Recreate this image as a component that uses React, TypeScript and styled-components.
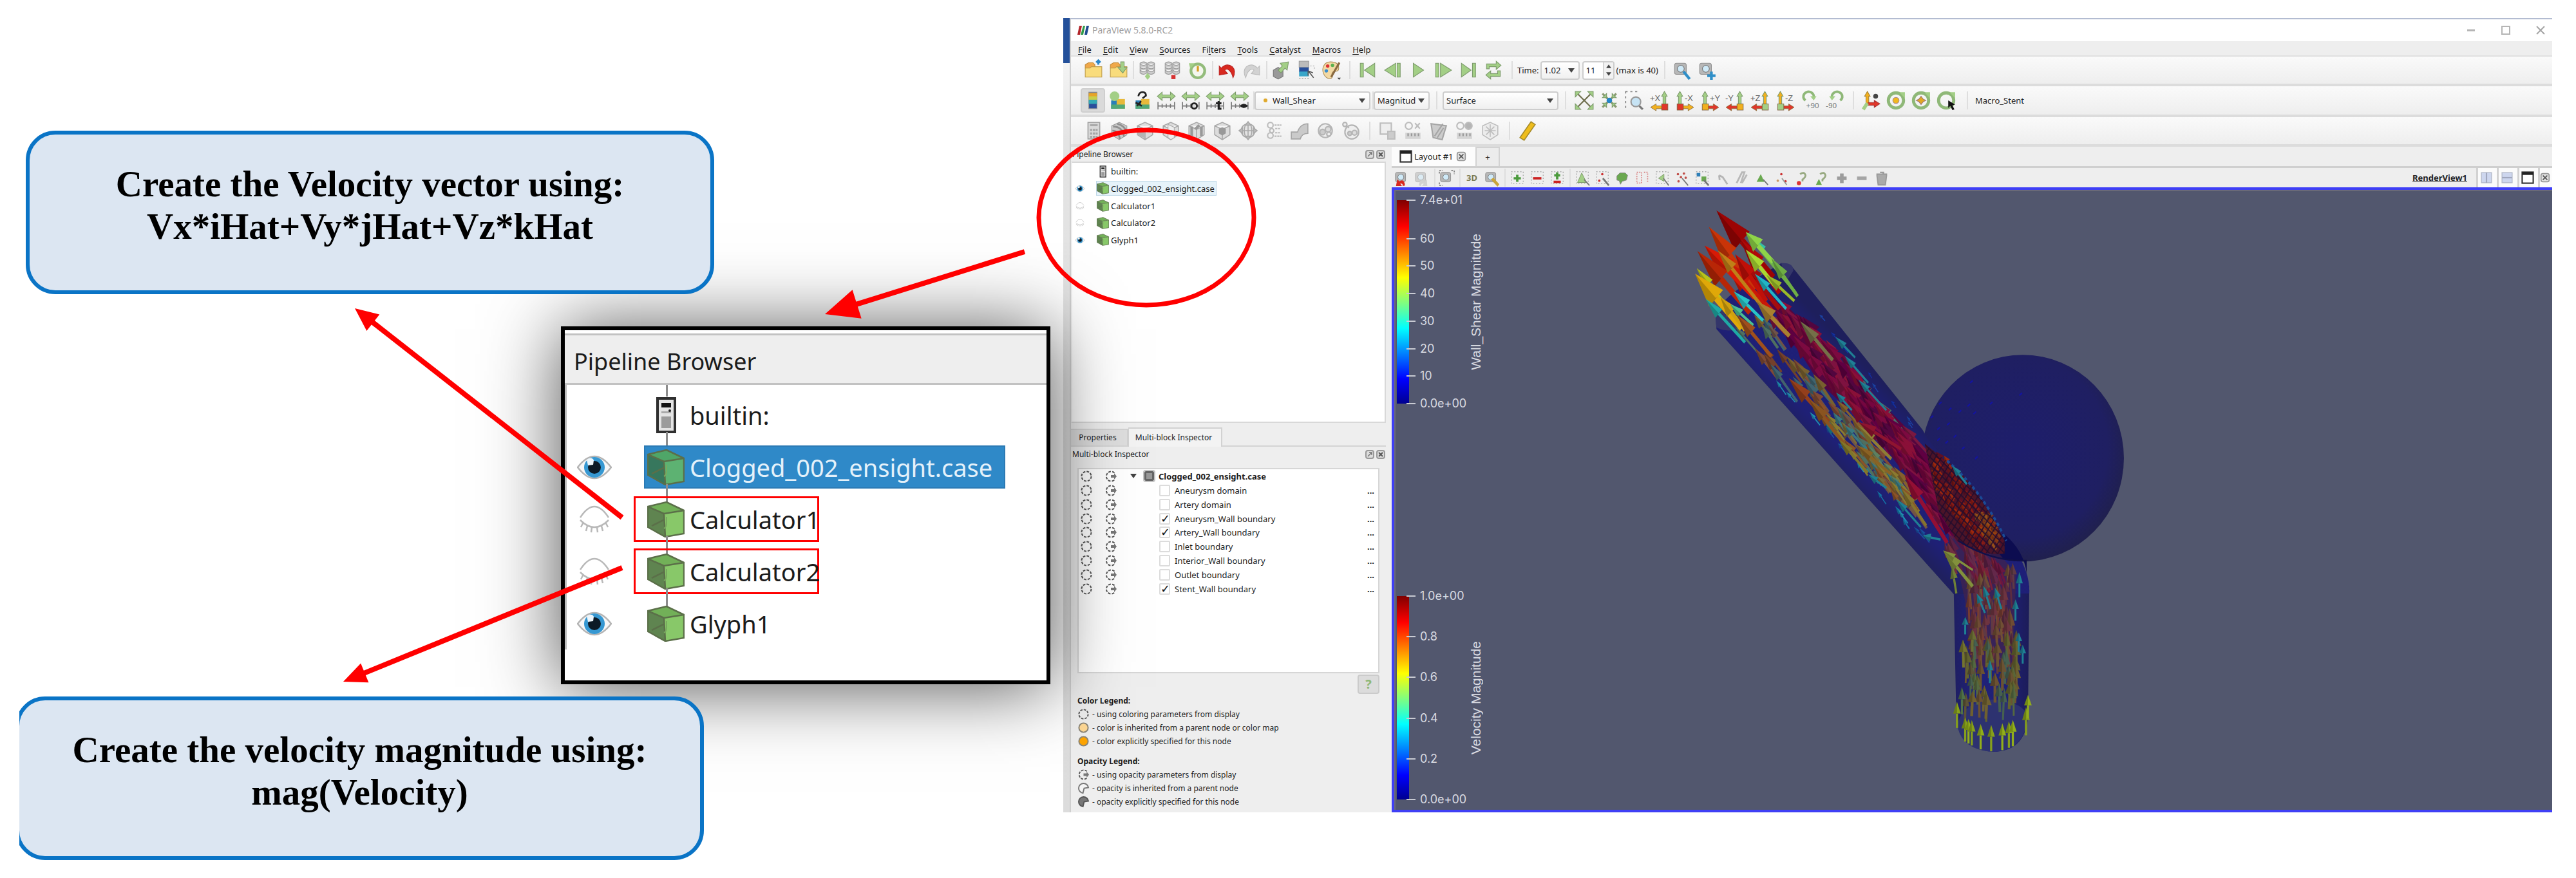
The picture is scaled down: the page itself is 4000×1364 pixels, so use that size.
import React, { useId } from 'react';
import styled, { createGlobalStyle, css } from 'styled-components';

const GlobalStyle = createGlobalStyle`
  *, *::before, *::after { box-sizing: border-box; }
  body { margin: 0; background: #fff; }
  button, input, select { font: inherit; color: inherit; margin: 0; }
  ul { list-style: none; margin: 0; padding: 0; }
`;

const ui = css`
  font-family: 'Noto Sans', 'Open Sans', sans-serif;
  font-size: 13px;
  line-height: 16px;
  color: #1c1c1c;
`;

/* ---------- figure ---------- */

const Figure = styled.main`
  position: relative;
  display: flex;
  align-items: flex-start;
  min-height: 100vh;
  overflow: hidden;
`;

const Notes = styled.section`
  position: relative;
  z-index: 1;
  flex: 0 0 1621px;
  margin-left: 30px;
  padding: 203px 20px 30px 0;
  display: flex;
  flex-direction: column;
  clip-path: inset(0 -200px 0 0);
`;

const Callout = styled.p<{ $indent: number }>`
  position: relative;
  z-index: 1;
  align-self: flex-start;
  width: 1069px;
  height: 254px;
  margin: 0 0 0 ${(p) => p.$indent}px;
  padding-top: 44px;
  border: 6px solid #0a74c6;
  border-radius: 46px;
  background: #dce6f2;
  color: #000;
  font: bold 57px/66px 'Liberation Serif', 'Times New Roman', serif;
  text-align: center;
`;

const Inset = styled.section`
  align-self: flex-end;
  width: 760px;
  height: 556px;
  margin: 50px 0 19px;
  border: 6px solid #000;
  background: #fff;
  box-shadow: 0 4px 110px rgba(0, 0, 0, 0.68);
  font: 38px/50px 'Noto Sans', 'Open Sans', sans-serif;
  color: #1b1b1b;
`;

const InsetTitle = styled.h2`
  margin: 5px 0 0;
  padding: 16px 14px 0;
  height: 80px;
  border: solid #c2c2c2;
  border-width: 3px 0;
  background: #eee;
  font: inherit;
  font-size: 36px;
`;

const InsetTree = styled.ul`
  padding-top: 6px;
  border-left: 3px solid #bdbdbd;
`;

const InsetRow = styled.li`
  position: relative;
  display: flex;
  align-items: center;
  height: 81px;
  padding-left: 16px;
  &::before {
    content: '';
    position: absolute;
    left: 154px;
    top: -14px;
    width: 3px;
    height: 28px;
    background: #8d8d8d;
  }
  &:first-child::before { top: -6px; height: 18px; }
`;

const InsetEye = styled.span`
  width: 56px;
  height: 52px;
  display: flex;
  align-items: center;
  & svg { width: 54px; height: 50px; }
`;

const InsetItem = styled.span<{ $selected?: boolean; $framed?: boolean }>`
  position: relative;
  display: flex;
  align-items: center;
  gap: 8px;
  height: 71px;
  padding-left: 18px;
  border: 3px solid transparent;
  & svg { width: 58px; height: 56px; flex: none; }
  margin-left: 32px;
  ${(p) => p.$framed && css`width: 288px; border-color: #f00; white-space: nowrap;`}
  ${(p) => p.$selected && css`
    margin-left: 48px;
    padding: 0 18px 0 3px;
    height: 67px;
    background: #2f89c8;
    border: 2px solid #2b7ab4;
    color: #e4f1fa;
  `}
`;

const Overlay = styled.svg`
  position: absolute;
  z-index: 2;
  left: 0;
  top: 0;
  width: 2000px;
  height: 1364px;
  pointer-events: none;
`;

/* ---------- application window ---------- */

const BackWindow = styled.div`
  flex: 0 0 10px;
  height: 1234px;
  margin-top: 28px;
  background: linear-gradient(#24509a 70px, #f4f4f4 70px, #e4e4e4 190px, #dcdcdc);
`;

const AppWindow = styled.div`
  ${ui}
  flex: 1;
  min-width: 0;
  margin: 28px 37px 0 0;
  border-top: 2px solid #b3bcd1;
  border-left: 2px solid #cfcfcf;
  background: #eee;
`;

const TitleBar = styled.header`
  display: flex;
  align-items: center;
  height: 34px;
  padding: 0 9px;
  background: #fff;
  color: #999;
`;

const AppTitle = styled.h1`
  flex: 1;
  margin: 0 0 0 4px;
  font: 14px/18px 'Open Sans', sans-serif;
`;

const WindowButtons = styled.div`
  display: flex;
  gap: 36px;
`;

const PlainButton = styled.button`
  display: grid;
  place-items: center;
  width: 18px;
  height: 18px;
  padding: 0;
  border: 0;
  background: none;
  flex: none;
  & svg { max-width: 16px; max-height: 16px; }
`;

const MenuBar = styled.nav`
  display: flex;
  gap: 18px;
  height: 24px;
  padding: 3px 11px 0;
  border-bottom: 2px solid #e0e0e0;
  & button { padding: 0; border: 0; background: none; }
  & u { text-underline-offset: 2px; }
`;

const Toolbar = styled.div<{ $h: number }>`
  display: flex;
  align-items: center;
  height: ${(p) => p.$h}px;
  padding-left: 15px;
  border-bottom: 4px solid #dcdcdc;
  background: linear-gradient(#fafafa, #eee);
`;

const ToolButton = styled.button<{ $w?: number; $on?: boolean }>`
  display: grid;
  place-items: center;
  flex: none;
  width: ${(p) => p.$w ?? 39}px;
  height: 38px;
  padding: 0;
  border: 2px solid ${(p) => (p.$on ? '#cfcfcf' : 'transparent')};
  border-radius: 4px;
  background: ${(p) => (p.$on ? '#dadada' : 'none')};
  & svg { width: 30px; height: 30px; overflow: visible; }
`;

const Handle = styled.span<{ $w?: number }>`
  flex: none;
  width: ${(p) => p.$w ?? 8}px;
  height: 28px;
  background: linear-gradient(90deg, transparent 50%, #dedede 50%, #dedede calc(50% + 2px), transparent calc(50% + 2px));
`;

const Field = styled.span<{ $w: number }>`
  position: relative;
  display: flex;
  align-items: center;
  flex: none;
  width: ${(p) => p.$w}px;
  height: 29px;
  border: 2px solid #cdcdcd;
  border-radius: 4px;
  background: linear-gradient(#fff, #f0f0f0);
  & > svg { position: absolute; right: 6px; top: 9px; width: 10px; height: 7px; pointer-events: none; }
`;

const Select = styled.select<{ $pad?: number }>`
  appearance: none;
  width: 100%;
  height: 100%;
  padding: 0 16px 0 ${(p) => p.$pad ?? 4}px;
  border: 0;
  background: none;
`;

const Dot = styled.i`
  position: absolute;
  left: 12px;
  width: 6px;
  height: 6px;
  border-radius: 3px;
  background: #e0a92c;
`;

const ToolLabel = styled.label<{ $l?: number; $r?: number }>`
  margin: 0 ${(p) => p.$r ?? 0}px 0 ${(p) => p.$l ?? 0}px;
`;

const Spin = styled(Field)`
  margin-left: 4px;
  background: #fff;
  & input { width: 30px; padding: 0 0 0 4px; border: 0; background: none; }
`;

const SpinButtons = styled.span`
  display: flex;
  flex-direction: column;
  flex: 1;
  height: 100%;
  border-left: 2px solid #d4d4d4;
  background: #f2f2f2;
  & button { flex: 1; display: grid; place-items: center; padding: 0; border: 0; background: none; }
  & svg { width: 8px; height: 6px; }
`;

const Body = styled.div`
  display: flex;
`;

const Side = styled.aside`
  flex: 0 0 498px;
  padding-right: 9px;
  display: flex;
  flex-direction: column;
`;

const DockTitle = styled.h2`
  display: flex;
  align-items: center;
  gap: 3px;
  height: 23px;
  margin: 0;
  padding: 0 1px 0 2px;
  font: inherit;
  font-size: 12px;
  & span { flex: 1; }
`;

const DockButton = styled.button`
  display: grid;
  place-items: center;
  width: 14px;
  height: 14px;
  padding: 0;
  border: 2px solid #999;
  border-radius: 4px;
  background: #ddd;
  & svg { width: 8px; height: 8px; }
`;

const Tree = styled.ul`
  height: 406px;
  border: 2px solid #d8d8d8;
  border-left-color: #eee;
  background: #fff;
  display: grid;
  grid-template-rows: repeat(5, 53fr) 535fr;
`;

const TreeRow = styled.li`
  display: flex;
  align-items: center;
  padding-left: 4px;
  & > span:first-child { width: 16px; height: 14px; margin-right: 17px; display: flex; }
  & > span:first-child svg { width: 16px; height: 14px; }
`;

const TreeItem = styled.span<{ $selected?: boolean }>`
  display: flex;
  align-items: center;
  gap: 3px;
  height: 23px;
  padding-right: 2px;
  border: 1px solid ${(p) => (p.$selected ? '#bcd6e6' : 'transparent')};
  background: ${(p) => (p.$selected ? '#e6f3fa' : 'none')};
  & svg { width: 19px; height: 19px; }
`;

const Tabs = styled.div`
  display: flex;
  align-items: flex-end;
  height: 37px;
  border-bottom: 2px solid #d4d4d4;
`;

const Tab = styled.button<{ $active?: boolean }>`
  width: ${(p) => (p.$active ? 146 : 89)}px;
  height: ${(p) => (p.$active ? 30 : 26)}px;
  padding: 0 4px 0 0;
  margin-bottom: ${(p) => (p.$active ? -2 : 0)}px;
  border: 2px solid #d2d2d2;
  border-bottom: 0;
  border-left-width: ${(p) => (p.$active ? 1 : 0)}px;
  background: ${(p) => (p.$active ? '#f3f3f3' : '#dedede')};
  font-size: 12px;
`;

const BlockTree = styled.ul`
  height: 319px;
  margin: 10px 10px 0;
  border: 2px solid #d6d6d6;
  background: #fff;
  display: grid;
  grid-template-rows: repeat(9, 22fr) 119fr;
`;

const BlockRow = styled.li<{ $root?: boolean }>`
  display: flex;
  align-items: center;
  font-weight: ${(p) => (p.$root ? 'bold' : 'normal')};
  padding-right: 6px;
  & > svg { width: 20px; height: 20px; margin: 0 18px 0 2px; flex: none; }
  & > svg + svg { margin: 0; }
  & > label { flex: 1; margin-left: 7px; }
`;

const Expander = styled.span<{ $root?: boolean }>`
  display: grid;
  place-items: center;
  width: ${(p) => (p.$root ? 42 : 65)}px;
  padding-left: ${(p) => (p.$root ? 8 : 0)}px;
  & svg { width: 10px; height: 7px; }
`;

const Check = styled.input`
  appearance: none;
  display: grid;
  place-items: center;
  width: 17px;
  height: 18px;
  border: 2px solid #dcdcdc;
  border-radius: 2px;
  background: #fff;
  &:checked::after { content: '✓'; font: bold 18px/14px 'DejaVu Sans', sans-serif; color: #111; }
  &[data-partial='true'] { width: 15px; height: 15px; border: 3px solid #666; background: #999; outline: 2px solid #c4c4c4; }
`;

const HelpRow = styled.div`
  display: flex;
  justify-content: flex-end;
  padding: 2px 10px 0;
`;

const HelpButton = styled.button`
  width: 34px;
  height: 30px;
  padding: 0;
  border: 2px solid #cbcbcb;
  border-radius: 4px;
  background: #dcdcdc;
  color: #8fb878;
  font: bold 20px/24px 'Noto Sans', sans-serif;
`;

const LegendBlock = styled.section`
  padding: 0 10px;
  & + & { padding-top: 10px; padding-bottom: 6px; }
  & h3 { margin: 0; font: bold 12px/21px 'Noto Sans', sans-serif; }
  & li { display: flex; align-items: center; gap: 4px; height: 21px; font-size: 12px; line-height: 21px; }
  & svg { width: 19px; height: 19px; flex: none; }
`;

const Main = styled.section`
  flex: 1;
  min-width: 0;
  display: flex;
  flex-direction: column;
`;

const LayoutTabs = styled.div`
  display: flex;
  height: 33px;
  border-bottom: 3px solid #cfcfcf;
`;

const LayoutTab = styled.span`
  display: flex;
  align-items: center;
  gap: 3px;
  padding: 0 0 0 12px;
  width: 130px;
  background: #fcfcfc;
  white-space: nowrap;
  & > svg { width: 20px; height: 20px; flex: none; }
`;

const AddTab = styled.button`
  width: 38px;
  border: solid #d2d2d2;
  border-width: 2px 2px 0;
  padding: 0;
  background: #ececec;
`;

const ViewBar = styled.div`
  display: flex;
  align-items: center;
  height: 30px;
`;

const ViewButton = styled(ToolButton)`
  height: 28px;
  & svg { width: 26px; height: 26px; }
  font-weight: bold;
  color: #7a7a52;
`;

const ViewName = styled.a`
  margin-left: auto;
  margin-right: 14px;
  color: #222;
  font-weight: bold;
  text-decoration: underline;
`;

const SplitButton = styled.button<{ $w?: number }>`
  display: grid;
  place-items: center;
  width: ${(p) => p.$w ?? 32}px;
  height: 30px;
  padding: 0 3px 0 0;
  border: solid #d2d2d2;
  border-width: 0 0 0 3px;
  background: #fbfbfb;
  & svg { width: ${(p) => (p.$w ? 16 : 20)}px; height: 22px; }
`;

const RenderArea = styled.div`
  flex: 1;
  display: flex;
  border: 4px solid #3f3ff5;
  border-right: 0;
  background: #52576e;
  box-shadow: inset 1px 1px 0 1px #6a6a78;
`;

const ColorLegends = styled.div`
  display: flex;
  flex-direction: column;
  justify-content: space-between;
  padding: 16px 0 16px 4px;
  width: 140px;
  flex: none;
`;

const Legend = styled.div`
  display: flex;
  align-items: center;
  height: 316px;
  color: #d9dbe2;
`;

const LegendBar = styled.div`
  position: relative;
  width: 20px;
  height: 100%;
  background: linear-gradient(#800000, #f00 13%, #ff0 38%, #0ff 63%, #00f 88%, #000090);
`;

const Tick = styled.span`
  position: absolute;
  left: 15px;
  display: flex;
  align-items: center;
  gap: 7px;
  height: 20px;
  margin-top: -10px;
  font: 18px/20px Inter, sans-serif;
  white-space: nowrap;
  &::before { content: ''; width: 14px; height: 2px; background: #c9cbd3; }
`;

const LegendTitle = styled.span`
  margin-left: 91px;
  writing-mode: vertical-rl;
  transform: rotate(180deg);
  font: 21px/26px 'Liberation Sans', Arial, sans-serif;
  white-space: nowrap;
`;

const Scene = styled.svg`
  flex: none;
  width: 800px;
  height: 934px;
  margin-left: 244px;
`;

/* ---------- small drawings ---------- */

const Caret = () => (
  <svg viewBox="0 0 10 7"><path d="M0 0h10L5 7z" fill="#444" /></svg>
);

const Cube = ({ tint }: { tint?: boolean }) => {
  const [top, left, right] = tint ? ['#4fa668', '#37775d', '#5db272'] : ['#72b058', '#5f8450', '#88c869'];
  return (
    <svg viewBox="0 0 58 56">
      <path d="M1 8L30 1 57 14 26 19z" fill={top} />
      <path d="M1 8L26 19 28 55 1 40z" fill={left} />
      <path d="M26 19L57 14 57 50 28 55z" fill={right} />
      <path d="M1 8L30 1 57 14V50L28 55 1 40zM1 8L26 19 57 14M26 19L28 55M7 38L27 28" fill="none" stroke="#5b6f49" strokeWidth="2.5" />
      <path d="M30 24V34Q30 40 26 42" fill="none" stroke="#79a95f" strokeWidth="2" />
    </svg>
  );
};

const Eye = ({ open }: { open: boolean }) =>
  open ? (
    <svg viewBox="0 0 54 50">
      <path d="M1 25Q27-9 53 25 27 59 1 25z" fill="#f7f7f7" stroke="#b4b4b4" strokeWidth="2.5" />
      <circle cx="27" cy="25" r="16" fill="#3698d2" />
      <circle cx="27" cy="25" r="10" fill="#0c1a26" />
      <path d="M15 13q8-5 11 1l-1 7-8 1z" fill="#eef6fb" />
    </svg>
  ) : (
    <svg viewBox="0 0 54 50" fill="none" stroke="#b9b9b9" strokeWidth="2.5">
      <path d="M5 22Q27-12 49 22" />
      <path d="M5 26Q27 48 49 26M9 31l-3 6M16 35l-2 8M23 37l-1 8M31 37l1 8M38 35l2 8M45 31l3 6" />
    </svg>
  );

const Server = () => (
  <svg viewBox="0 0 58 56">
    <rect x="16" y="2" width="27" height="52" fill="#e3e3e3" stroke="#2f2f2f" strokeWidth="4" />
    <rect x="22" y="9" width="15" height="7" fill="#111" />
    <rect x="22" y="22" width="15" height="3" fill="#aaa" />
    <rect x="22" y="30" width="15" height="18" fill="#9b9b9b" />
    <circle cx="35" cy="21" r="2" fill="#222" />
  </svg>
);

const Ring = ({ kind }: { kind: string }) => (
  <svg viewBox="0 0 20 20">
    {kind === 'dash' && <circle cx="10" cy="10" r="7.5" fill="none" stroke="#555" strokeWidth="2" strokeDasharray="3.9 2" />}
    {kind === 'pie' && (
      <g>
        <path d="M15.5 4.5A7.5 7.5 0 1 0 15.5 15.5" fill="none" stroke="#555" strokeWidth="2" strokeDasharray="3.9 2" />
        <path d="M10 8h5V5l4 5-4 5v-3h-5z" fill="#777" />
      </g>
    )}
    {kind === 'light' && <circle cx="10" cy="10" r="7.5" fill="#ffd995" stroke="#8b8577" strokeWidth="2" />}
    {kind === 'solid' && <circle cx="10" cy="10" r="7.5" fill="#ffa500" stroke="#8b8577" strokeWidth="2" />}
    {kind === 'open' && <path d="M9 18A8 8 0 1 1 18 9L11 10z" fill="#f4f4f4" stroke="#777" strokeWidth="2" />}
    {kind === 'full' && <path d="M9 18A8 8 0 1 1 18 9L11 10z" fill="#777" stroke="#555" strokeWidth="2" />}
  </svg>
);

const G = '#a3cf86';
const GS = '#7c9a6b';

const camera = (
  <g>
    <rect x="3" y="4" width="17" height="16" rx="3" fill="#b7b7b7" stroke="#8e8e8e" />
    <circle cx="12" cy="12" r="5" fill="#cfeaf8" stroke="#777" />
  </g>
);
const cyl = (x: number) => (
  <path d={`M${x} 4Q${x + 5} 0 ${x + 10} 4V18Q${x + 5} 22 ${x} 18zM${x} 5Q${x + 5} 9 ${x + 10} 5M${x} 10Q${x + 5} 14 ${x + 10} 10M${x} 14Q${x + 5} 18 ${x + 10} 14`} fill="#ccc" stroke="#999" />
);
const box = <path d="M3 7L14 2 25 7V20L14 27 3 20zM3 7L14 12 25 7M14 12V27" fill="#dcdcdc" stroke="#a8a8a8" strokeWidth="1.5" />;
const dashBox = <rect x="4" y="3" width="20" height="20" fill="none" stroke="#aaa" strokeWidth="1.5" strokeDasharray="2 3" />;
const folder = (
  <g>
    <path d="M2 6l5-3h6l3 3v5H2z" fill="#f0a84a" stroke="#c08a3a" />
    <path d="M2 24V11h7l2-2h15v15z" fill="#f9dc7c" stroke="#bd9a48" />
  </g>
);
const mini = (
  <g>
    <path d="M5 14h10v12H5z" fill="#2a7fb8" />
    <path d="M13 12h12v14H13z" fill="#e8b93a" />
    <path d="M5 20h20v6H5z" fill="#52a877" />
  </g>
);
const range = (
  <g>
    <path d="M1 8l7-6v4h12V2l7 6-7 6v-4H8v4z" fill={G} stroke={GS} />
    <path d="M2 16V27M26 16V27M2 22H26M8 19v6M14 19v6M20 19v6" stroke="#777" strokeWidth="1.5" fill="none" />
  </g>
);
const axis = (up: string, side: string, corner: string, left: boolean) => {
  const c = left ? 18 : 4;
  return (
    <g>
      <path d={`M${c + 1} 20V8h-2l4-7 4 7h-2V20z`} fill={up} stroke={GS} />
      <path d={left ? 'M18 22H9v-3l-8 5 8 5v-3h9z' : 'M10 22h9v-3l8 5-8 5v-3h-9z'} fill={side} stroke="#8a6d3a" strokeWidth=".8" />
      <rect x={c - 1} y="19" width="9" height="9" fill={corner} stroke="#7a5a3a" strokeWidth=".8" />
    </g>
  );
};
const axisText = (t: string, left: boolean) => (
  <text x={left ? 0 : 14} y="15" fontSize="12" fill="#666" fontFamily="Liberation Sans, sans-serif">{t}</text>
);

const icons: Record<string, React.ReactNode> = {
  open: <g>{folder}<path d="M21 0v6M18 3l3-3 3 3" stroke="#2a86c8" strokeWidth="3" fill="none" /></g>,
  save: <g>{folder}<path d="M17 2h5v8h4l-6 8-7-8h4z" fill={G} stroke={GS} /></g>,
  connect: <g>{cyl(3)}{cyl(14)}<path d="M14 18l4 5-4 5-4-5z" fill={G} /></g>,
  disconnect: <g>{cyl(3)}{cyl(14)}<rect x="12" y="21" width="6" height="6" fill="#d63333" /></g>,
  clock: <g><circle cx="14" cy="15" r="10" fill="#f4f6ee" stroke="#93bc7b" strokeWidth="4" /><path d="M14 8v8" stroke="#d69b22" strokeWidth="3" /><path d="M1 4h9L3 12z" fill={G} /></g>,
  undo: <path d="M3 8l3 3Q14 3 22 9 28 15 23 25 21 16 16 13 13 12 11 14l4 5-12 2z" fill="#d8291f" stroke="#b22" />,
  redo: <path d="M25 8l-3 3Q14 3 6 9 0 15 5 25 7 16 12 13 15 12 17 14l-4 5 12 2z" fill="#d2d2d2" stroke="#bbb" />,
  source: <g><path d="M3 14l7-4 7 4v9l-7 4-7-4z" fill="#999" stroke="#777" /><path d="M13 4l12-2-2 12-3-3-6 7-4-4 6-6z" fill={G} stroke={GS} /></g>,
  select: <g><rect x="4" y="1" width="14" height="9" fill="#bbb" stroke="#999" /><path d="M4 10h14v7H4z" fill="#274f9b" /><path d="M4 16h14v7H4z" fill="#38a6c9" /><path d="M17 15l8 10M17 15v7M17 15l7 3" stroke="#555" strokeWidth="1.5" /><path d="M20 8h6v6M4 26h14" stroke="#999" strokeDasharray="2 2" fill="none" /></g>,
  palette: <g><path d="M13 2C3 2 0 12 3 19s9 9 12 6-2-5 1-8 9 1 9-6S20 2 13 2z" fill="#f3d9a4" stroke="#a98a55" /><circle cx="9" cy="8" r="2.5" fill="#d33" /><circle cx="7" cy="15" r="2.5" fill="#3a8fd0" /><circle cx="16" cy="7" r="2.5" fill="#5ab04f" /><path d="M26 3L14 24" stroke="#8a6a40" strokeWidth="3" /><path d="M23 25h5l-2.5 3z" fill="#444" /></g>,
  first: <g fill={G} stroke={GS}><rect x="3" y="4" width="4.5" height="20" /><path d="M24 4V24L9 14z" /></g>,
  prev: <g fill={G} stroke={GS}><rect x="20" y="4" width="4.5" height="20" /><path d="M18 4V24L2 14z" /></g>,
  play: <path d="M7 4V24L22 14z" fill={G} stroke={GS} />,
  next: <g fill={G} stroke={GS}><rect x="3" y="4" width="4.5" height="20" /><path d="M10 4V24L26 14z" /></g>,
  last: <g fill={G} stroke={GS}><rect x="20" y="4" width="4.5" height="20" /><path d="M4 4V24L18 14z" /></g>,
  loop: <path d="M4 12V5h14V1l7 6-7 6V9H8v3zM24 15v8H10v4l-7-6 7-6v4h10v-4z" fill={G} stroke={GS} />,
  camPick: <g>{camera}<path d="M16 16l9 11" stroke="#2f8fc8" strokeWidth="4" /></g>,
  camAdd: <g>{camera}<path d="M20 16v12M14 22h12" stroke="#2f8fc8" strokeWidth="4" /></g>,
  bar: <g><rect x="8" y="2" width="12" height="24" fill="#2b4f9c" stroke="#999" /><path d="M8 3h12v6H8z" fill="#e6a42a" /><path d="M8 8h12v6H8z" fill="#c9cf4a" /><path d="M8 13h12v6H8z" fill="#35a9b5" /></g>,
  edit: <g>{mini}<circle cx="10" cy="8" r="7" fill={G} /></g>,
  useSep: <g>{mini}<path d="M9 8Q10 2 15 2T20 7L15 11M5 17l9 5M7 22l6-7" stroke="#222" strokeWidth="2.5" fill="none" /></g>,
  range,
  rangeC: <g>{range}<circle cx="19" cy="22" r="4" fill="#ddd" stroke="#222" strokeWidth="2.5" /></g>,
  rangeT: <g>{range}<path d="M19 15v11h4M15 18h8" stroke="#222" strokeWidth="3" fill="none" /></g>,
  rangeV: <g>{range}<path d="M14 22q6-6 12 0-6 6-12 0z" fill="#222" /></g>,
  zoomAll: <g><path d="M5 5L23 23M23 5L5 23" stroke="#6f6f4e" strokeWidth="2" /><path d="M1 1h8L1 9zM27 1h-8l8 8zM1 27h8L1 19zM27 27h-8l8-8z" fill={G} stroke={GS} /></g>,
  zoomIn: <g><path d="M4 4L24 24M24 4L4 24" stroke="#8a9a72" strokeWidth="3" /><path d="M10 4v6H4zM18 4v6h6zM10 24v-6H4zM18 24v-6h6z" fill={G} stroke={GS} /><circle cx="14" cy="14" r="4" fill="#2486c9" /></g>,
  zoomBox: <g><path d="M1 1h20M1 1v24" stroke="#999" strokeDasharray="3 4" strokeWidth="2" fill="none" /><circle cx="16" cy="16" r="7" fill="#c6e3f4" stroke="#999" strokeWidth="2" /><path d="M21 22l5 5" stroke="#777" strokeWidth="3" /></g>,
  px: <g>{axis(G, '#f2b01e', '#e0362a', true)}{axisText('+X', true)}</g>,
  mx: <g>{axis(G, '#f2b01e', '#e0362a', false)}{axisText('-X', false)}</g>,
  py: <g>{axis(G, '#e0362a', '#f2b01e', false)}{axisText('+Y', false)}</g>,
  my: <g>{axis(G, '#e0362a', '#f2b01e', true)}{axisText('-Y', true)}</g>,
  pz: <g>{axis('#f2b01e', '#e0362a', G, true)}{axisText('+Z', true)}</g>,
  mz: <g>{axis('#f2b01e', '#e0362a', G, false)}{axisText('-Z', false)}</g>,
  cw: <g><path d="M7 14A7.5 7 0 1 1 19 9" fill="none" stroke="#8fb878" strokeWidth="3.5" /><path d="M14 8h9l-4 6z" fill={G} /><text x="8" y="25" fontSize="11" fill="#777" fontFamily="Liberation Sans, sans-serif">+90</text></g>,
  ccw: <g><path d="M21 14A7.5 7 0 1 0 9 9" fill="none" stroke="#8fb878" strokeWidth="3.5" /><path d="M14 8H5l4 6z" fill={G} /><text x="0" y="25" fontSize="11" fill="#777" fontFamily="Liberation Sans, sans-serif">-90</text></g>,
  axes: <g><path d="M7 20V8H5l4-7 4 7h-2v12z" fill="#f2b01e" stroke="#a58030" /><path d="M10 17h9v-3l8 5-8 5v-3h-9z" fill="#e0362a" stroke="#a33" /><path d="M9 18l-6 9" stroke={G} strokeWidth="5" /><circle cx="21" cy="8" r="3.5" fill="#444" /></g>,
  centre: <g><circle cx="14" cy="14" r="11" fill="none" stroke="#8fb878" strokeWidth="4.5" /><circle cx="14" cy="14" r="4.5" fill="#f0b820" stroke="#a88" /><path d="M19 2h8v9z" fill={G} /></g>,
  centreHide: <g><circle cx="14" cy="14" r="11" fill="none" stroke="#8fb878" strokeWidth="4.5" /><path d="M14 8l3 4 4 2-4 2-3 4-3-4-4-2 4-2z" fill="#e2a722" stroke="#977" /><path d="M19 2h8v9z" fill={G} /></g>,
  pick: <g><circle cx="14" cy="14" r="11" fill="none" stroke="#8fb878" strokeWidth="4.5" /><path d="M19 2h8v9z" fill={G} /><path d="M17 14l10 6-4 1 3 6-3 1-3-6-3 3z" fill="#111" /></g>,
  calc: <g><rect x="6" y="2" width="17" height="24" fill="#d9d9d9" stroke="#a0a0a0" strokeWidth="1.5" /><path d="M9 6h11" stroke="#aaa" strokeWidth="3" /><path d="M9 13h11M9 18h11M9 23h11" stroke="#a5a5a5" strokeWidth="3" strokeDasharray="3 1" /></g>,
  contour: <g><path d="M3 7L14 2 25 7V20L14 27 3 20z" fill="#c9c9c9" stroke="#999" /><path d="M5 8q14 0 16 15M4 14q9 0 11 12M11 4q12 3 13 13" fill="none" stroke="#8f8f8f" strokeWidth="2.5" /></g>,
  clip: <g>{box}<path d="M3 9l11 5v11L3 20z" fill="#b5b5b5" /></g>,
  slice: <g>{box}<path d="M10 5l9 4v15l-5 3-4-3z" fill="#eee" stroke="#aaa" /></g>,
  threshold: <g>{box}<path d="M7 8v14M21 8v14M12 12l6-6" stroke="#999" strokeWidth="4" /></g>,
  extract: <g>{box}<path d="M9 11l5-2 5 2v7l-5 3-5-3z" fill="#999" /></g>,
  glyph: <g fill="#e4e4e4" stroke="#a8a8a8" strokeWidth="1.5"><circle cx="14" cy="14" r="10" /><path d="M14 1l4 5h-8zM14 27l4-5h-8zM1 14l5-4v8zM27 14l-5-4v8z" fill="#bbb" /><path d="M14 6v16M6 14h16M10 6q-3 8 0 16M18 6q3 8 0 16" fill="none" /></g>,
  stream: <g fill="none" stroke="#bbb" strokeWidth="2"><circle cx="9" cy="6" r="4" /><circle cx="9" cy="21" r="4" /><circle cx="11" cy="14" r="3" /><path d="M15 6h10M16 11h8M16 17h8M15 22h10" strokeDasharray="3 1" /></g>,
  warp: <path d="M2 16h9q4-12 15-12v14q-9 0-11 8H2z" fill="#cacaca" stroke="#a5a5a5" strokeWidth="1.5" />,
  group: <g fill="#eee" stroke="#b5b5b5" strokeWidth="2"><circle cx="14" cy="14" r="10" /><circle cx="10" cy="16" r="4" fill="#ccc" /><circle cx="18" cy="12" r="4" fill="#ddd" /><circle cx="19" cy="19" r="3" /></g>,
  level: <g fill="#eee" stroke="#b5b5b5" strokeWidth="2"><circle cx="15" cy="16" r="10" /><circle cx="5" cy="5" r="3" /><path d="M7 7l4 3" /><circle cx="12" cy="18" r="3" fill="#ccc" /><circle cx="19" cy="17" r="3.5" fill="#ddd" /></g>,
  exSel: <g fill="#eee" stroke="#bdbdbd" strokeWidth="2"><path d="M4 3h16v16H4z" /><rect x="15" y="15" width="10" height="11" fill="#ccc" /></g>,
  plotT: <g fill="none" stroke="#bdbdbd" strokeWidth="2"><circle cx="8" cy="7" r="5" /><path d="M17 3l7 8M24 3l-7 8" /><rect x="3" y="17" width="22" height="9" fill="#d4d4d4" stroke="none" /><path d="M7 18v4M12 18v4M17 18v4M22 18v4" stroke="#999" /></g>,
  plotL: <g fill="#ccc" stroke="#a5a5a5" strokeWidth="2"><path d="M3 4l22 3-6 20-13-3z" /><path d="M8 22L20 4M12 24l9-14" /></g>,
  plotG: <g fill="none" stroke="#bdbdbd" strokeWidth="2"><circle cx="8" cy="7" r="5" /><circle cx="20" cy="7" r="5" fill="#b5b5b5" /><rect x="3" y="17" width="22" height="9" fill="#d4d4d4" stroke="none" /><path d="M7 18v4M12 18v4M17 18v4M22 18v4" stroke="#999" /></g>,
  probe: <g fill="none" stroke="#bdbdbd" strokeWidth="1.5"><path d="M3 7L14 2 25 7V20L14 27 3 20z" fill="#ececec" /><path d="M14 5v18M6 14h16M8 8l12 12M20 8L8 20" /></g>,
  ruler: <path d="M3 24L19 1l6 4L9 28z" fill="#eebd1d" stroke="#a58a2a" strokeWidth="1.5" />,
  vUndo: <g>{camera}<path d="M6 16l4 3q8-5 9 7l-4 1q1-5-4-4l3 4H4z" fill="#d8291f" /></g>,
  vRedo: <g opacity=".55">{camera}<path d="M22 16l-4 3q-8-5-9 7l4 1q-1-5 4-4l-3 4h9z" fill="#bbb" /></g>,
  vCam: <g>{camera}<path d="M1 6V1h6M21 1h5v6M1 21v5h6" stroke="#888" strokeWidth="2" fill="none" strokeDasharray="3 2" /></g>,
  vEdit: <g>{camera}<path d="M12 16l4-3 10 11-3 4z" fill="#caa53a" /></g>,
  sPlus: <g>{dashBox}<path d="M14 8v12M8 14h12" stroke="#4b9a3c" strokeWidth="4" /></g>,
  sMinus: <g>{dashBox}<path d="M7 14h14" stroke="#cc2222" strokeWidth="4" /></g>,
  sBoth: <g>{dashBox}<path d="M14 4v12M9 9h10" stroke="#4b9a3c" strokeWidth="4" /><path d="M8 20h12" stroke="#cc2222" strokeWidth="4" /></g>,
  sCell: <g>{dashBox}<path d="M13 5l8 16H6z" fill={G} stroke={GS} /><path d="M17 16l9 10" stroke="#777" strokeWidth="2" /></g>,
  sPts: <g>{dashBox}<circle cx="14" cy="7" r="2" fill="#c33" /><circle cx="9" cy="18" r="2" fill="#c33" /><path d="M15 14l10 12" stroke="#777" strokeWidth="3" /></g>,
  sFrus: <path d="M5 10l5-5h9l4 4-2 8-7 2-3 5-2-6-4-1z" fill="#6aa84f" stroke="#8a8a8a" />,
  sFruP: <g fill="none" stroke="#d98a8a" strokeWidth="2" strokeDasharray="2 2"><path d="M5 4h8v18H5zM17 4h6v18" /></g>,
  sPoly: <g>{dashBox}<path d="M8 14l9-7v12z" fill={G} stroke={GS} /><path d="M16 14l9 12" stroke="#777" strokeWidth="2" /></g>,
  sPolP: <g fill="#c0504a"><circle cx="7" cy="7" r="2" /><circle cx="17" cy="6" r="2" /><circle cx="12" cy="12" r="2" /><circle cx="20" cy="13" r="2" /><circle cx="8" cy="19" r="2" /><path d="M14 14l10 12" stroke="#777" strokeWidth="2" /></g>,
  sBlock: <g>{dashBox}<rect x="5" y="5" width="6" height="6" fill="#2f7fb8" /><rect x="13" y="11" width="8" height="8" fill="#6aa84f" /><path d="M17 17l8 9" stroke="#777" strokeWidth="3" /></g>,
  sWand: <path d="M9 9l6 3 8 12M9 9l1 8" fill="none" stroke="#b5b5b5" strokeWidth="3" />,
  sGrey: <path d="M5 22L14 4h4L12 22M14 22L22 8" fill="none" stroke="#b8b8b8" strokeWidth="3" />,
  sTri: <g><path d="M12 7l6 13H5z" fill="#69a94f" /><path d="M16 16l8 9" stroke="#777" strokeWidth="2" /></g>,
  sDots: <g><circle cx="13" cy="7" r="2" fill="#c33" /><circle cx="7" cy="18" r="2" fill="#c96" /><circle cx="20" cy="19" r="2" fill="#c33" /><path d="M14 14l8 11" stroke="#999" strokeWidth="2" /></g>,
  sAskP: <g><path d="M11 7q7-5 9 2 0 4-5 7v3" fill="none" stroke="#97a980" strokeWidth="3" /><circle cx="9" cy="22" r="3.5" fill="#d33" /></g>,
  sAskC: <g><path d="M11 7q7-5 9 2 0 4-5 7v3" fill="none" stroke="#97a980" strokeWidth="3" /><path d="M9 15l5 10H4z" fill="#69a94f" /></g>,
  gPlus: <path d="M14 6v16M6 14h16" stroke="#9c9c9c" strokeWidth="6" />,
  gMinus: <path d="M6 14h16" stroke="#a5a5a5" strokeWidth="6" />,
  trash: <path d="M6 7h16v3l-2 15H8L6 10zM11 4h6v3" fill="#aaa" stroke="#999" strokeWidth="2" />,
  splitV: <g><rect x="3" y="3" width="22" height="22" fill="#cdd6ee" stroke="#b5bbcc" strokeWidth="2" /><path d="M14 3v22" stroke="#a0a7bd" strokeWidth="3" /></g>,
  splitH: <g><rect x="3" y="3" width="22" height="22" fill="#cdd6ee" stroke="#b5bbcc" strokeWidth="2" /><path d="M3 14h22" stroke="#a0a7bd" strokeWidth="3" /></g>,
  win: <g><rect x="2" y="2" width="24" height="24" fill="#fff" stroke="#333" strokeWidth="3" /><path d="M2 5h24" stroke="#222" strokeWidth="6" /></g>,
  closeBox: <g><rect x="3" y="3" width="22" height="22" rx="5" fill="#e2e2e2" stroke="#999" strokeWidth="3" /><path d="M8 8l12 12M20 8L8 20" stroke="#555" strokeWidth="3" /></g>,
};

const Icon = ({ name }: { name: string }) => <svg viewBox="0 0 28 28" aria-hidden="true">{icons[name]}</svg>;

const Tools = ({ names, width, on }: { names: string[]; width?: number; on?: string }) => (
  <>
    {names.map((n) => (
      <ToolButton key={n} $w={width} $on={n === on} aria-label={n}><Icon name={n} /></ToolButton>
    ))}
  </>
);

const ViewTools = ({ names }: { names: string[] }) => (
  <>
    {names.map((n) => (
      <ViewButton key={n} $w={31} aria-label={n}>{n === '3D' ? '3D' : <Icon name={n} />}</ViewButton>
    ))}
  </>
);

const DockButtons = () => (
  <>
    <DockButton aria-label="Float"><svg viewBox="0 0 8 8"><path d="M1 7l6-6M3 1h4v4" fill="none" stroke="#777" strokeWidth="1.5" /></svg></DockButton>
    <DockButton aria-label="Close"><svg viewBox="0 0 8 8"><path d="M1 1l6 6M7 1L1 7" stroke="#555" strokeWidth="2" /></svg></DockButton>
  </>
);

const Drop = ({ label, value, width, dot }: { label: string; value: string; width: number; dot?: boolean }) => (
  <Field $w={width}>
    {dot && <Dot />}
    <Select $pad={dot ? 26 : 4} aria-label={label} defaultValue={value}><option>{value}</option></Select>
    <Caret />
  </Field>
);

/* ---------- flow scene ---------- */

type Vec = { x: number; y: number; tx: number; ty: number; c: string; w: number };

const Glyph = ({ x, y, tx, ty, c, w }: Vec) => {
  const len = Math.hypot(tx - x, ty - y);
  const ux = (tx - x) / len;
  const uy = (ty - y) / len;
  const h = Math.min(len * 0.45, w * 4.2);
  const bx = x + ux * h;
  const by = y + uy * h;
  const r = w * 1.15;
  return (
    <g>
      <path d={`M${bx} ${by}L${tx} ${ty}`} stroke={c} strokeWidth={w * 0.65} />
      <path d={`M${x} ${y}L${bx - uy * r} ${by + ux * r}L${bx + uy * r} ${by - ux * r}z`} fill={c} />
      <path d={`M${x} ${y}L${bx} ${by}L${bx - uy * r} ${by + ux * r}z`} fill="#000" opacity=".2" />
    </g>
  );
};

const makeRandom = (seed: number) => () => {
  seed = (seed * 16807) % 2147483647;
  return seed / 2147483647;
};

const along = (pts: number[][], t: number) => {
  const s = t * (pts.length - 1);
  const i = Math.min(pts.length - 2, Math.floor(s));
  const f = s - i;
  return [pts[i][0] + (pts[i + 1][0] - pts[i][0]) * f, pts[i][1] + (pts[i + 1][1] - pts[i][1]) * f];
};

const band = (seed: number, n: number, pts: number[][], spread: number, len: number, w: number, colors: string[], dir: number[]): Vec[] => {
  const rnd = makeRandom(seed * 7919);
  rnd();
  return Array.from({ length: n }, (_, i) => {
    const [px, py] = along(pts, (i + rnd()) / n);
    const off = (rnd() - 0.5) * 2 * spread;
    const l = len * (0.7 + rnd() * 0.6);
    const x = px + off * dir[1];
    const y = py - off * dir[0];
    const bend = (rnd() - 0.5) * 0.12;
    return { x, y, tx: x + (dir[0] + bend) * l, ty: y + (dir[1] - bend) * l, c: colors[Math.floor(rnd() * colors.length)], w: w * (0.75 + rnd() * 0.5) };
  });
};

const down = [0.68, 0.73];
const inner: Vec[] = [
  ...band(67, 8, [[520, 330], [700, 510], [840, 640]], 8, 26, 4, ['#1330a0', '#1c44a8'], down),
  ...band(61, 14, [[330, 440], [560, 630], [760, 830], [860, 905]], 12, 40, 5, ['#1573a8', '#1a50a0', '#1f8eb0'], down),
  ...band(11, 44, [[310, 350], [480, 505], [650, 660], [800, 790]], 38, 100, 11, ['#6f5348', '#7f4a34', '#4f6f60', '#85602c', '#3f6470', '#78602f', '#74402c'], down),
  ...band(5, 26, [[450, 330], [620, 475], [760, 620], [840, 700]], 18, 90, 10, ['#4a6f66', '#7b1840', '#8c1a3a', '#93323a', '#6a0a40'], down),
  ...band(23, 110, [[400, 310], [560, 455], [720, 605], [850, 740], [920, 850]], 36, 120, 15, ['#75063f', '#7c0a40', '#52063f', '#8a1038', '#5f0042', '#7e1240'], down),
  ...band(37, 30, [[500, 560], [640, 670], [720, 735], [790, 790]], 24, 84, 9, ['#7a6a38', '#5d7f60', '#8a5228', '#8a7a30', '#3a7880'], down),
];

const stent: Vec[] = [
  ...band(131, 60, [[885, 700], [930, 780], [985, 850], [1050, 905]], 40, 50, 9, ['#8c1c14', '#741414', '#9e280e', '#801a18', '#5e1024'], [0.6, 0.8]),
  ...band(137, 16, [[1010, 850], [1050, 880], [1070, 915]], 24, 36, 9, ['#9a420e', '#94501a', '#7e3618'], [0.6, 0.8]),
];

const elbow: Vec[] = [
  ...band(71, 30, [[945, 900], [995, 960], [1060, 1000]], 46, 100, 11, ['#6a1640', '#7a2038', '#5c2044', '#703040', '#64284a'], [0.35, 0.93]),
  ...band(83, 50, [[1055, 980], [1065, 1100], [1070, 1200]], 74, 84, 11, ['#6d3440', '#763c32', '#6f4c34', '#5c2c40', '#704f34', '#5f3a44'], [0.03, 1]),
  ...band(97, 44, [[1065, 1150], [1066, 1240], [1068, 1320]], 86, 74, 11, ['#62622f', '#6f6030', '#546840', '#466050', '#6b5232', '#5c5236'], [0, 1]),
];

const teal: Vec[] = [
  [590, 402, 650, 455], [618, 450, 690, 520], [660, 512, 745, 590], [592, 545, 640, 590], [690, 755, 745, 790], [855, 912, 910, 922],
  [1020, 1060, 1045, 1110], [1150, 1005, 1150, 1070], [1075, 1045, 1095, 1100], [985, 1120, 985, 1165], [1148, 1160, 1148, 1210], [1060, 1230, 1060, 1290], [945, 732, 990, 780], [775, 818, 850, 890],
  [1040, 1040, 1062, 1100], [1138, 1075, 1138, 1130], [1160, 1192, 1160, 1240], [560, 625, 610, 670],
].map(([x, y, tx, ty]) => ({ x, y, tx, ty, c: '#1f7f94', w: 9 }));

const highlights: Vec[] = [
  { x: 448, y: 508, tx: 570, ty: 620, c: '#943f1c', w: 17 },
  { x: 510, y: 562, tx: 620, ty: 680, c: '#8a5420', w: 15 },
  { x: 600, y: 665, tx: 688, ty: 750, c: '#80762a', w: 11 },
  { x: 660, y: 630, tx: 760, ty: 715, c: '#8f7c34', w: 13 },
  { x: 656, y: 680, tx: 760, ty: 755, c: '#8a6224', w: 12 },
  { x: 483, y: 362, tx: 582, ty: 462, c: '#747048', w: 15 },
  { x: 660, y: 620, tx: 790, ty: 690, c: '#8f1430', w: 13 },
  { x: 800, y: 755, tx: 930, ty: 930, c: '#940f34', w: 17 },
  { x: 918, y: 950, tx: 1008, ty: 1042, c: '#82903c', w: 14 },
  { x: 918, y: 950, tx: 1008, ty: 1000, c: '#82903c', w: 9 },
  { x: 790, y: 790, tx: 866, ty: 886, c: '#85742e', w: 12 },
  { x: 945, y: 990, tx: 958, ty: 1060, c: '#6f8038', w: 10 },
  { x: 978, y: 1178, tx: 980, ty: 1250, c: '#74742f', w: 12 },
  { x: 1008, y: 1152, tx: 1006, ty: 1210, c: '#6a6c34', w: 12 },
];

const outlet: Vec[] = [
  { x: 317, y: 133, tx: 470, ty: 290, c: '#6fb04a', w: 12 },
  { x: 345, y: 150, tx: 420, ty: 230, c: '#35bfa6', w: 9 },
  { x: 290, y: 195, tx: 420, ty: 330, c: '#a50c0c', w: 20 },
  { x: 228, y: 78, tx: 400, ty: 250, c: '#9c0404', w: 29 },
  { x: 300, y: 150, tx: 420, ty: 290, c: '#b00808', w: 20 },
  { x: 205, y: 120, tx: 345, ty: 280, c: '#c93408', w: 24 },
  { x: 250, y: 205, tx: 400, ty: 340, c: '#c81808', w: 24 },
  { x: 285, y: 190, tx: 380, ty: 310, c: '#c01008', w: 20 },
  { x: 192, y: 168, tx: 345, ty: 300, c: '#d81a06', w: 26 },
  { x: 170, y: 182, tx: 330, ty: 340, c: '#b82606', w: 24 },
  { x: 232, y: 180, tx: 372, ty: 330, c: '#c08018', w: 15 },
  { x: 317, y: 178, tx: 410, ty: 275, c: '#a9d832', w: 17 },
  { x: 317, y: 133, tx: 400, ty: 210, c: '#8fd448', w: 19 },
  { x: 395, y: 200, tx: 475, ty: 298, c: '#6fae44', w: 14 },
  { x: 345, y: 240, tx: 440, ty: 330, c: '#22b4c4', w: 12 },
  { x: 380, y: 243, tx: 465, ty: 310, c: '#9ab82a', w: 12 },
  { x: 168, y: 226, tx: 280, ty: 345, c: '#b8c41a', w: 13 },
  { x: 163, y: 240, tx: 305, ty: 380, c: '#e0a808', w: 26 },
  { x: 240, y: 300, tx: 315, ty: 385, c: '#cfa010', w: 16 },
  { x: 195, y: 305, tx: 315, ty: 416, c: '#1fa9a4', w: 13 },
  { x: 280, y: 285, tx: 370, ty: 360, c: '#28c2c6', w: 13 },
  { x: 270, y: 318, tx: 340, ty: 372, c: '#4cbf90', w: 11 },
  { x: 350, y: 310, tx: 450, ty: 400, c: '#a88030', w: 18 },
  { x: 290, y: 345, tx: 395, ty: 452, c: '#a0501c', w: 15 },
];

const inlet: Vec[] = [
  [960, 1338, 1405], [975, 1300, 1370], [985, 1378, 1440], [995, 1382, 1445], [1005, 1385, 1450], [1032, 1395, 1460], [1064, 1397, 1465], [1098, 1393, 1462],
  [1118, 1388, 1456], [1130, 1384, 1452], [1170, 1352, 1424], [1176, 1320, 1380],
].map(([x, y, ty], i) => ({ x, y, tx: x, ty, c: i === 1 ? '#4f7048' : i % 2 ? '#92ae1a' : '#869f1c', w: 10 }));

const vectors = (list: Vec[]) => list.map((v, i) => <Glyph key={i} {...v} />);

const stentShape = 'M862 676L905 706 960 740Q1040 810 1105 925L1105 958Q1030 965 960 925L905 850 885 770z';

const FlowScene = () => {
  const id = useId();
  return (
    <Scene viewBox="0 25 1568 1542" preserveAspectRatio="none" role="img" aria-label="Velocity glyphs in the artery">
      <defs>
        <linearGradient id={`${id}t`} gradientUnits="userSpaceOnUse" x1="520" y1="680" x2="690" y2="480">
          <stop offset="0" stopColor="#1f205f" /><stop offset=".2" stopColor="#1f2076" /><stop offset=".75" stopColor="#1e1f78" /><stop offset="1" stopColor="#1e1f5c" />
        </linearGradient>
        <linearGradient id={`${id}v`} x1="0" x2="1">
          <stop offset="0" stopColor="#1f1f62" /><stop offset=".3" stopColor="#20217a" /><stop offset=".75" stopColor="#1f2074" /><stop offset="1" stopColor="#1c1c58" />
        </linearGradient>
        <radialGradient id={`${id}s`} cx=".48" cy=".45" r=".55">
          <stop offset="0" stopColor="#1e1e6c" /><stop offset=".8" stopColor="#1f1f62" /><stop offset="1" stopColor="#20204e" />
        </radialGradient>
        <pattern id={`${id}m`} width="20" height="22" patternUnits="userSpaceOnUse" patternTransform="rotate(-8)">
          <path d="M0 0L20 22M20 0L0 22" stroke="#240c2c" strokeWidth="3" />
        </pattern>
      </defs>
      <ellipse cx="1160" cy="713" rx="308" ry="265" fill={`url(#${id}s)`} />
      <path d="M950 1050L1180 1040 1176 1380Q1165 1466 1070 1466 975 1462 958 1385z" fill={`url(#${id}v)`} />
      <path d="M225 345Q240 312 290 282L425 213Q450 213 462 226L855 640 870 662 1090 900Q1185 985 1180 1060L950 1062 228 382z" fill={`url(#${id}t)`} />
      <path d="M228 378Q222 345 238 322L300 380Q260 392 228 378zM425 213Q462 210 462 232L440 262z" fill="#34366a" />
      <path d="M960 1395Q985 1335 1068 1332 1150 1335 1175 1370 1170 1464 1070 1466 972 1462 960 1395z" fill="#2d3270" />
      <path d="M1100 905Q1165 950 1172 1010L1172 976Q1130 982 1060 962z" fill="#0c0c50" />
      <path d="M385 310L440 320 600 460 800 630 900 740 960 900 900 850 700 640 540 520z" fill="#54063f" />
      {vectors(inner)}
      <path d="M940 910L1090 960 1140 1010 1130 1250 1000 1250 985 1080z" fill="#4a2444" opacity=".6" />
      {vectors(elbow)}
      <path d={stentShape} fill="#4c1428" />
      {vectors(stent)}
      <path d={stentShape} fill={`url(#${id}m)`} />
      <path d="M930 720Q1040 800 1110 925" fill="none" stroke="#1a4a96" strokeWidth="7" strokeDasharray="9 8" />
      <path d="M965 925Q1060 978 1172 976" fill="none" stroke="#10104a" strokeWidth="4" />
      {vectors(teal)}
      {vectors(highlights)}
      {vectors(outlet)}
      {vectors(inlet)}
      {[[905, 575], [935, 590], [965, 596], [992, 580], [1010, 600], [930, 628], [950, 660], [900, 640], [880, 610], [1000, 520], [1060, 575], [1150, 552], [925, 675], [900, 668], [975, 690], [1015, 715]].map(([x, y]) => (
        <path key={`${x}-${y}`} d={`M${x} ${y}l8-6`} stroke="#1414a0" strokeWidth="4" />
      ))}
    </Scene>
  );
};

/* ---------- data ---------- */

const pipeline = [
  { name: 'builtin:', server: true },
  { name: 'Clogged_002_ensight.case', visible: true, selected: true },
  { name: 'Calculator1', visible: false, framed: true },
  { name: 'Calculator2', visible: false, framed: true },
  { name: 'Glyph1', visible: true },
];

const blocks = [
  ['Aneurysm domain', false], ['Artery domain', false], ['Aneurysm_Wall boundary', true], ['Artery_Wall boundary', true],
  ['Inlet boundary', false], ['Interior_Wall boundary', false], ['Outlet boundary', false], ['Stent_Wall boundary', true],
] as [string, boolean][];

const menus = [['', 'F', 'ile'], ['', 'E', 'dit'], ['', 'V', 'iew'], ['', 'S', 'ources'], ['Fi', 'l', 'ters'], ['', 'T', 'ools'], ['', 'C', 'atalyst'], ['', 'M', 'acros'], ['', 'H', 'elp']];

const legends = [
  { title: 'Wall_Shear Magnitude', max: 74, ticks: [[74, '7.4e+01'], [60, '60'], [50, '50'], [40, '40'], [30, '30'], [20, '20'], [10, '10'], [0, '0.0e+00']] },
  { title: 'Velocity Magnitude', max: 1, ticks: [[1, '1.0e+00'], [0.8, '0.8'], [0.6, '0.6'], [0.4, '0.4'], [0.2, '0.2'], [0, '0.0e+00']] },
] as { title: string; max: number; ticks: [number, string][] }[];

const Arrow = ({ from, to, size }: { from: number[]; to: number[]; size: number }) => {
  const a = Math.atan2(to[1] - from[1], to[0] - from[0]);
  const bx = to[0] - Math.cos(a) * size * 0.8;
  const by = to[1] - Math.sin(a) * size * 0.8;
  return (
    <g>
      <path d={`M${from[0]} ${from[1]}L${bx} ${by}`} stroke="#f00" strokeWidth="8" />
      <path d={`M0 0L${-size} ${size * 0.45}V${-size * 0.45}z`} fill="#f00" transform={`translate(${to[0]} ${to[1]}) rotate(${(a * 180) / Math.PI})`} />
    </g>
  );
};

export default function App() {
  return (
    <>
      <GlobalStyle />
      <Figure>
        <Notes>
          <Callout $indent={10}>Create the Velocity vector using:<br />Vx*iHat+Vy*jHat+Vz*kHat</Callout>
          <Inset>
            <InsetTitle>Pipeline Browser</InsetTitle>
            <InsetTree>
              {pipeline.map((p) => (
                <InsetRow key={p.name}>
                  <InsetEye>{!p.server && <Eye open={!!p.visible} />}</InsetEye>
                  <InsetItem $selected={p.selected} $framed={p.framed}>
                    {p.server ? <Server /> : <Cube tint={p.selected} />}
                    {p.name}
                  </InsetItem>
                </InsetRow>
              ))}
            </InsetTree>
          </Inset>
          <Callout $indent={-6}>Create the velocity magnitude using:<br />mag(Velocity)</Callout>
        </Notes>

        <BackWindow />
        <AppWindow>
          <TitleBar>
            <svg width="20" height="16" viewBox="0 0 20 16">
              <path d="M4 1h4L5 15H1z" fill="#b3262b" /><path d="M10 1h3l-3 14H6z" fill="#2f9a48" /><path d="M15 1h4l-3 14h-4z" fill="#1f4b8f" />
            </svg>
            <AppTitle>ParaView 5.8.0-RC2</AppTitle>
            <WindowButtons>
              <PlainButton aria-label="Minimize"><svg width="14" height="14"><path d="M1 7h12" stroke="#b5b5b5" strokeWidth="3" /></svg></PlainButton>
              <PlainButton aria-label="Maximize"><svg width="14" height="14"><rect x="1" y="1" width="12" height="12" fill="none" stroke="#b5b5b5" strokeWidth="2" /></svg></PlainButton>
              <PlainButton aria-label="Close"><svg width="14" height="14"><path d="M1 1l12 12M13 1L1 13" stroke="#a5a5a5" strokeWidth="2" /></svg></PlainButton>
            </WindowButtons>
          </TitleBar>
          <MenuBar>
            {menus.map(([a, u, b]) => <button key={u + b}>{a}<u>{u}</u>{b}</button>)}
          </MenuBar>
          <Toolbar $h={46}>
            <Tools names={['open', 'save']} /><Handle $w={6} />
            <Tools names={['connect', 'disconnect', 'clock']} /><Handle $w={6} />
            <Tools names={['undo', 'redo']} /><Handle $w={6} />
            <Tools names={['source', 'select', 'palette']} /><Handle $w={18} />
            <Tools names={['first', 'prev', 'play', 'next', 'last', 'loop']} /><Handle $w={18} />
            <ToolLabel $r={2}>Time:</ToolLabel>
            <Drop label="Time" value="1.02" width={61} />
            <Spin $w={50}>
              <input aria-label="Time index" defaultValue="11" />
              <SpinButtons>
                <button aria-label="Up"><svg viewBox="0 0 10 7"><path d="M0 7h10L5 0z" fill="#444" /></svg></button>
                <button aria-label="Down"><Caret /></button>
              </SpinButtons>
            </Spin>
            <ToolLabel $l={3}>(max is 40)</ToolLabel>
            <Handle $w={18} />
            <Tools names={['camPick', 'camAdd']} />
          </Toolbar>
          <Toolbar $h={48}>
            <Tools names={['bar', 'edit', 'useSep', 'range', 'rangeC', 'rangeT', 'rangeV']} on="bar" width={38} />
            <Handle $w={4} />
            <Drop label="Array" value="Wall_Shear" width={180} dot />
            <Handle $w={5} />
            <Drop label="Component" value="Magnitud" width={87} />
            <Handle $w={20} />
            <Drop label="Representation" value="Surface" width={180} />
            <Handle $w={20} />
            <Tools names={['zoomAll', 'zoomIn', 'zoomBox', 'px', 'mx', 'py', 'my', 'pz', 'mz', 'cw', 'ccw']} />
            <Handle $w={16} />
            <Tools names={['axes', 'centre', 'centreHide', 'pick']} />
            <Handle $w={26} />
            <ToolLabel>Macro_Stent</ToolLabel>
          </Toolbar>
          <Toolbar $h={46}>
            <Tools names={['calc', 'contour', 'clip', 'slice', 'threshold', 'extract', 'glyph', 'stream', 'warp', 'group', 'level']} width={40} />
            <Handle $w={16} />
            <Tools names={['exSel', 'plotT', 'plotL', 'plotG', 'probe']} width={40} />
            <Handle $w={18} />
            <Tools names={['ruler']} width={40} />
          </Toolbar>
          <Body>
            <Side>
              <DockTitle><span>Pipeline Browser</span><DockButtons /></DockTitle>
              <Tree>
                {pipeline.map((p) => (
                  <TreeRow key={p.name}>
                    <span>{!p.server && <Eye open={!!p.visible} />}</span>
                    <TreeItem $selected={p.selected}>{p.server ? <Server /> : <Cube />}{p.name}</TreeItem>
                  </TreeRow>
                ))}
              </Tree>
              <Tabs>
                <Tab>Properties</Tab>
                <Tab $active>Multi-block Inspector</Tab>
              </Tabs>
              <DockTitle><span>Multi-block Inspector</span><DockButtons /></DockTitle>
              <BlockTree>
                <BlockRow $root>
                  <Ring kind="dash" /><Ring kind="pie" />
                  <Expander $root><Caret /></Expander>
                  <Check type="checkbox" id="root" data-partial="true" />
                  <label htmlFor="root">Clogged_002_ensight.case</label>
                </BlockRow>
                {blocks.map(([name, on]) => (
                  <BlockRow key={name}>
                    <Ring kind="dash" /><Ring kind="pie" />
                    <Expander />
                    <Check type="checkbox" id={name} defaultChecked={on} />
                    <label htmlFor={name}>{name}</label>
                    <b>...</b>
                  </BlockRow>
                ))}
              </BlockTree>
              <HelpRow><HelpButton aria-label="Help">?</HelpButton></HelpRow>
              <LegendBlock>
                <h3>Color Legend:</h3>
                <ul>
                  <li><Ring kind="dash" />- using coloring parameters from display</li>
                  <li><Ring kind="light" />- color is inherited from a parent node or color map</li>
                  <li><Ring kind="solid" />- color explicitly specified for this node</li>
                </ul>
              </LegendBlock>
              <LegendBlock>
                <h3>Opacity Legend:</h3>
                <ul>
                  <li><Ring kind="pie" />- using opacity parameters from display</li>
                  <li><Ring kind="open" />- opacity is inherited from a parent node</li>
                  <li><Ring kind="full" />- opacity explicitly specified for this node</li>
                </ul>
              </LegendBlock>
            </Side>
            <Main>
              <LayoutTabs>
                <LayoutTab><Icon name="win" />Layout #1<PlainButton aria-label="Close layout"><Icon name="closeBox" /></PlainButton></LayoutTab>
                <AddTab aria-label="Add layout">+</AddTab>
              </LayoutTabs>
              <ViewBar>
                <ViewTools names={['vUndo', 'vRedo']} /><Handle />
                <ViewTools names={['vCam']} /><Handle />
                <ViewTools names={['3D', 'vEdit']} /><Handle />
                <ViewTools names={['sPlus', 'sMinus', 'sBoth']} /><Handle />
                <ViewTools names={['sCell', 'sPts', 'sFrus', 'sFruP', 'sPoly', 'sPolP', 'sBlock', 'sWand', 'sGrey', 'sTri', 'sDots', 'sAskP', 'sAskC', 'gPlus', 'gMinus', 'trash']} />
                <ViewName href="#view">RenderView1</ViewName>
                <SplitButton aria-label="Split horizontal"><Icon name="splitV" /></SplitButton>
                <SplitButton aria-label="Split vertical"><Icon name="splitH" /></SplitButton>
                <SplitButton aria-label="Maximize view"><Icon name="win" /></SplitButton>
                <SplitButton $w={22} aria-label="Close view"><Icon name="closeBox" /></SplitButton>
              </ViewBar>
              <RenderArea>
                <ColorLegends>
                  {legends.map((l) => (
                    <Legend key={l.title}>
                      <LegendBar>
                        {l.ticks.map(([v, t]) => <Tick key={t} style={{ top: `${(1 - v / l.max) * 100}%` }}>{t}</Tick>)}
                      </LegendBar>
                      <LegendTitle>{l.title}</LegendTitle>
                    </Legend>
                  ))}
                </ColorLegends>
                <FlowScene />
              </RenderArea>
            </Main>
          </Body>
        </AppWindow>

        <Overlay viewBox="0 0 2000 1364">
          <ellipse cx="1780" cy="338" rx="167" ry="136" fill="none" stroke="#f00" strokeWidth="7" />
          <Arrow from={[1591, 391]} to={[1281, 488]} size={52} />
          <Arrow from={[966, 804]} to={[551, 479]} size={36} />
          <Arrow from={[966, 882]} to={[533, 1059]} size={36} />
        </Overlay>
      </Figure>
    </>
  );
}
